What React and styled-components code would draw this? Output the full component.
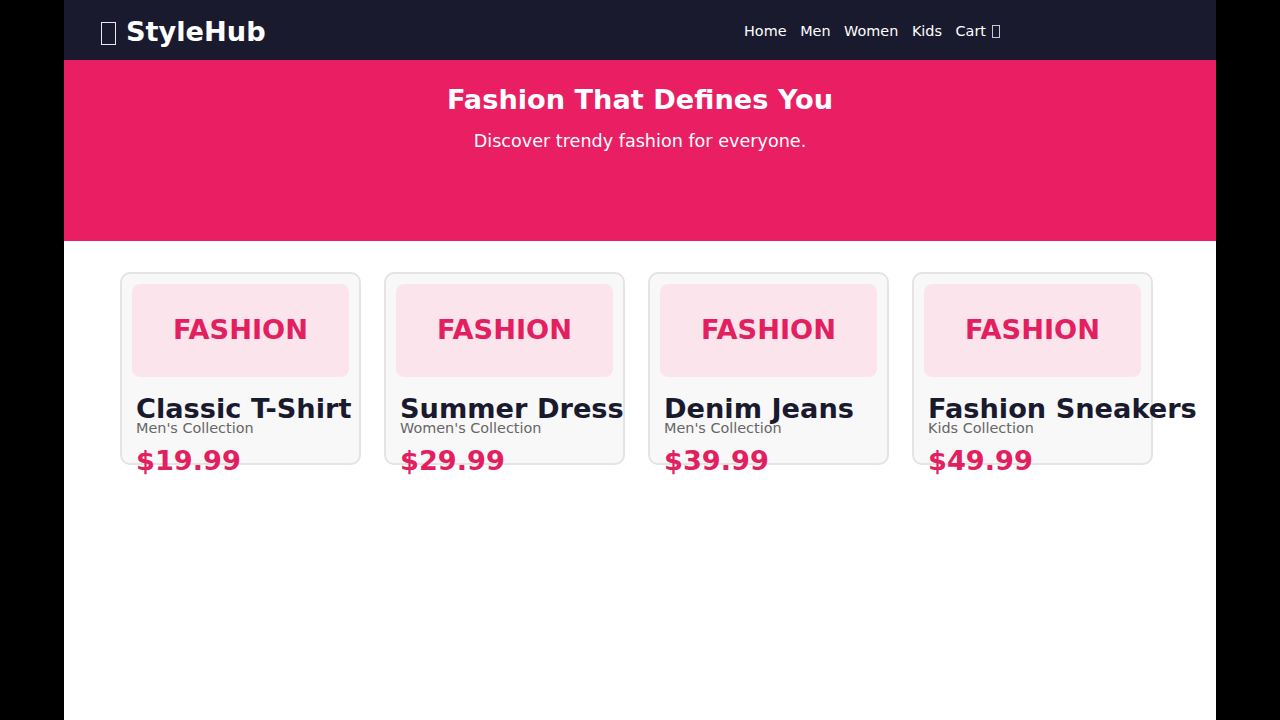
import styled, { createGlobalStyle } from 'styled-components';

const GlobalStyle = createGlobalStyle`
  html, body {
    margin: 0;
    padding: 0;
    background: #000;
    font-family: "DejaVu Sans", sans-serif;
  }
`;

const Page = styled.div`
  width: 1152px;
  height: 720px;
  margin: 0 auto;
  background: #fff;
  overflow: hidden;
`;

const Nav = styled.nav`
  height: 60px;
  background: #1a1a2e;
  display: flex;
  align-items: center;
  justify-content: space-between;
  padding: 0 216px 0 37px;
  color: #fff;
`;

const Logo = styled.div`
  font-size: 27.2px;
  font-weight: 700;
  white-space: nowrap;
  margin-top: 3px;
`;

// the emoji has no font in the picture, it shows as an empty box
const LogoGlyph = styled.span`
  display: inline-block;
  width: 15px;
  height: 23px;
  margin-right: 10px;
  box-sizing: border-box;
  border: 1.5px solid #e8e8ee;
  vertical-align: -4px;
`;

const NavLinks = styled.div`
  display: flex;
  gap: 13.6px;
  margin-top: 2px;
`;

const NavLink = styled.a`
  color: #fff;
  font-size: 14.4px;
  text-decoration: none;
  white-space: nowrap;
`;

const CartGlyph = styled.span`
  display: inline-block;
  width: 8px;
  height: 13px;
  margin-left: 6px;
  box-sizing: border-box;
  border: 1px solid #c8c8d4;
  vertical-align: -2px;
`;

const Hero = styled.section`
  height: 181px;
  box-sizing: border-box;
  padding-top: 24px;
  background: #e91e63;
  color: #fff;
  text-align: center;
`;

const HeroTitle = styled.h1`
  margin: 0;
  font-size: 27.2px;
  line-height: 32px;
  font-weight: 700;
`;

const HeroText = styled.p`
  margin: 15px 0 0;
  font-size: 17.6px;
  line-height: 20px;
`;

const Products = styled.section`
  display: flex;
  gap: 23px;
  padding: 31px 56px 0;
`;

const Card = styled.article`
  width: 241px;
  height: 193px;
  box-sizing: border-box;
  padding: 10px;
  background: #f8f8f8;
  border: 2px solid #e4e4e4;
  border-radius: 10px;
`;

const Thumb = styled.div`
  height: 93px;
  box-sizing: border-box;
  padding-bottom: 2px;
  display: flex;
  align-items: center;
  justify-content: center;
  background: #fce4ec;
  border-radius: 8px;
  color: #e2205f;
  font-size: 27.2px;
  font-weight: 700;
`;

const Info = styled.div`
  padding: 19px 4px 0;
  white-space: nowrap;
`;

const Name = styled.h3`
  margin: 0;
  font-size: 27.2px;
  line-height: 25px;
  font-weight: 700;
  color: #1a1a2e;
`;

const Collection = styled.p`
  margin: 0;
  font-size: 14.4px;
  line-height: 14px;
  color: #666;
`;

const Price = styled.p`
  margin: 10px 0 0;
  font-size: 27.2px;
  line-height: 32px;
  font-weight: 700;
  color: #e2205f;
`;

const products = [
  { name: 'Classic T-Shirt', collection: "Men's Collection", price: '$19.99' },
  { name: 'Summer Dress', collection: "Women's Collection", price: '$29.99' },
  { name: 'Denim Jeans', collection: "Men's Collection", price: '$39.99' },
  { name: 'Fashion Sneakers', collection: 'Kids Collection', price: '$49.99' },
];

const App = () => {
  return (
    <Page>
      <GlobalStyle />
      <Nav>
        <Logo><LogoGlyph />StyleHub</Logo>
        <NavLinks>
          <NavLink href="#">Home</NavLink>
          <NavLink href="#">Men</NavLink>
          <NavLink href="#">Women</NavLink>
          <NavLink href="#">Kids</NavLink>
          <NavLink href="#">Cart<CartGlyph /></NavLink>
        </NavLinks>
      </Nav>
      <Hero>
        <HeroTitle>Fashion That Defines You</HeroTitle>
        <HeroText>Discover trendy fashion for everyone.</HeroText>
      </Hero>
      <Products>
        {products.map((p) => (
          <Card key={p.name}>
            <Thumb>FASHION</Thumb>
            <Info>
              <Name>{p.name}</Name>
              <Collection>{p.collection}</Collection>
              <Price>{p.price}</Price>
            </Info>
          </Card>
        ))}
      </Products>
    </Page>
  );
};

export default App;
